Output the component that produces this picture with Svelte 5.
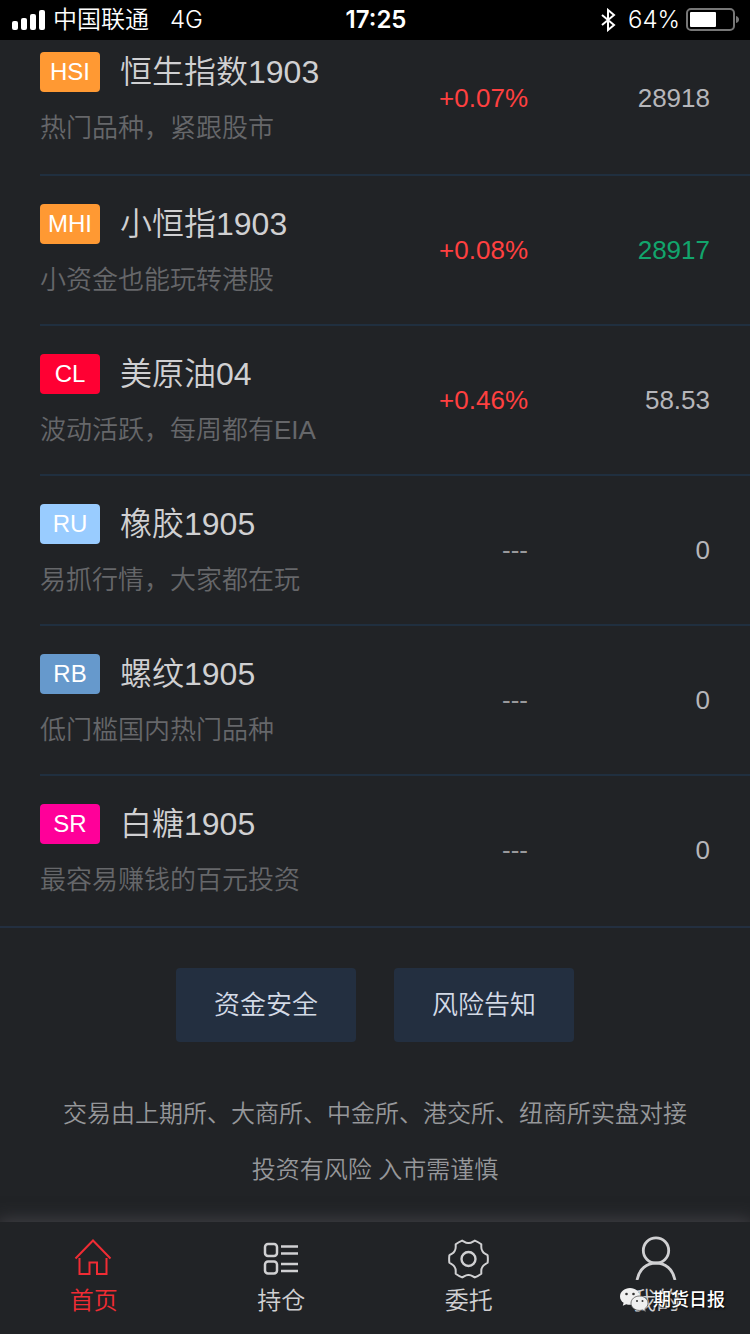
<script>
	const products = [
		{ code: "HSI", color: "#ff9933", name: "恒生指数1903", desc: "热门品种，紧跟股市", change: "+0.07%", price: "28918" },
		{ code: "MHI", color: "#ff9933", name: "小恒指1903", desc: "小资金也能玩转港股", change: "+0.08%", price: "28917", falling: true },
		{ code: "CL", color: "#ff0033", name: "美原油04", desc: "波动活跃，每周都有EIA", change: "+0.46%", price: "58.53" },
		{ code: "RU", color: "#99ccff", name: "橡胶1905", desc: "易抓行情，大家都在玩", change: "---", price: "0" },
		{ code: "RB", color: "#6699cc", name: "螺纹1905", desc: "低门槛国内热门品种", change: "---", price: "0" },
		{ code: "SR", color: "#ff0099", name: "白糖1905", desc: "最容易赚钱的百元投资", change: "---", price: "0" },
	];

	const tabs = [
		{ id: "home", label: "首页" },
		{ id: "hold", label: "持仓" },
		{ id: "order", label: "委托" },
		{ id: "mine", label: "我的" },
	];

	let active = "home";

	// six teeth, with a rounded valley between each pair
	const gearPath = (cx, cy) => {
		const at = (deg, r) => {
			const a = deg * Math.PI / 180;
			return `${(cx + r * Math.cos(a)).toFixed(2)} ${(cy + r * Math.sin(a)).toFixed(2)}`;
		};
		let d = `M${at(-11, 19.5)}`;
		for (let k = 0; k < 360; k += 60) {
			d += `Q${at(k, 19.6)} ${at(k + 11, 19.5)}`;
			d += `C${at(k + 18, 17.4)} ${at(k + 20, 16)} ${at(k + 30, 16)}`;
			d += `C${at(k + 40, 16)} ${at(k + 42, 17.4)} ${at(k + 49, 19.5)}`;
		}
		return d + "Z";
	};
</script>

<div class="app">
	<header class="status">
		<div class="carrier">
			<svg class="signal" width="34" height="20" viewBox="0 0 34 20" fill="#fff">
				<rect x="0" y="11" width="6" height="9" rx="2" />
				<rect x="9" y="8" width="6" height="12" rx="2" />
				<rect x="18" y="4" width="6" height="16" rx="2" />
				<rect x="27" y="0" width="6" height="20" rx="2" />
			</svg>
			<span>中国联通</span>
			<span class="network">4G</span>
		</div>
		<time>17:25</time>
		<div class="power">
			<svg width="16" height="24" viewBox="0 0 16 24" fill="none" stroke="#fff" stroke-width="2">
				<path d="M2 7L14 17L8 22V2L14 7L2 17" />
			</svg>
			<span class="percent">64%</span>
			<svg width="54" height="24" viewBox="0 0 54 24">
				<rect x="1" y="1" width="47" height="21" rx="4" fill="none" stroke="#777" stroke-width="2" />
				<rect x="4" y="4" width="26" height="15" rx="1" fill="#fff" />
				<path d="M50 8Q53 9 53 11.500Q53 14 50 15Z" fill="#777" />
			</svg>
		</div>
	</header>

	<ul class="products">
		{#each products as item}
			<li>
				<div class="info">
					<div class="title">
						<span class="badge" style="background-color: {item.color}">{item.code}</span>
						<h2>{item.name}</h2>
					</div>
					<p>{item.desc}</p>
				</div>
				<span class="change" class:empty={item.change === "---"}>{item.change}</span>
				<span class="price" class:falling={item.falling}>{item.price}</span>
			</li>
		{/each}
	</ul>

	<section class="about">
		<div class="buttons">
			<button>资金安全</button>
			<button>风险告知</button>
		</div>
		<p>交易由上期所、大商所、中金所、港交所、纽商所实盘对接</p>
		<p>投资有风险 入市需谨慎</p>
	</section>

	<nav>
		{#each tabs as tab}
			<a href="#{tab.id}" class:active={active === tab.id} on:click={() => active = tab.id}>
				<svg width="44" height="44" viewBox="0 0 44 44" fill="none" stroke="currentColor" stroke-width="2">
					{#if tab.id === "home"}
						<path d="M3.500 22.500L21 4.500L38.500 22.500" />
						<path d="M7.500 22V38H17.500V26.500H25V38H34.500V22" />
					{:else if tab.id === "hold"}
						<g stroke-width="2.500">
							<rect x="6" y="8" width="12" height="12" rx="3" />
							<rect x="6" y="25.500" width="12" height="12" rx="3" />
							<path d="M22 10.500H39M22 17.500H39M22 28H39M22 35H39" />
						</g>
					{:else if tab.id === "order"}
						<path d={gearPath(21.5, 23)} stroke-linejoin="round" />
						<circle cx="21.500" cy="23" r="7" stroke-width="2.400" />
					{:else}
						<circle cx="22" cy="14.500" r="12.700" stroke-width="2.800" />
						<path d="M3 44C5 33 13 27 22 27S39 33 41 44" stroke-width="2.800" />
					{/if}
				</svg>
				<span>{tab.label}</span>
			</a>
		{/each}
		<div class="watermark">
			<svg width="30" height="24" viewBox="0 0 30 24">
				<path d="M10 0C4.500 0 0 3.700 0 8.400C0 11 1.400 13.300 3.600 14.800L2.800 17.800L6.200 16.200C7.400 16.600 8.700 16.800 10 16.800C15.500 16.800 20 13 20 8.400S15.500 0 10 0Z" fill="#f0f0f0" />
				<path d="M19.500 8C14.800 8 11 11.200 11 15.200S14.800 22.400 19.500 22.400C20.600 22.400 21.600 22.200 22.600 21.900L25.600 23.400L24.900 20.700C26.800 19.400 28 17.400 28 15.200C28 11.200 24.200 8 19.500 8Z" fill="#f0f0f0" stroke="#555" stroke-width="0.800" />
				<g fill="#333">
					<circle cx="6.500" cy="6" r="1.300" />
					<circle cx="13.500" cy="6" r="1.300" />
					<circle cx="17" cy="13" r="1" />
					<circle cx="22.500" cy="13" r="1" />
				</g>
			</svg>
			<span>期货日报</span>
		</div>
	</nav>
</div>

<style>
	:global(body) {
		margin: 0;
		background-color: #212326;
	}
	.app {
		display: flex;
		flex-direction: column;
		min-height: 100vh;
		color: #d0d0d2;
		font-family: "Liberation Sans", "Noto Sans CJK SC", sans-serif;
		font-weight: 350;
	}
	h2, p, ul { margin: 0; padding: 0; font-weight: inherit; }

	.status {
		display: grid;
		grid-template-columns: 1fr auto 1fr;
		align-items: center;
		height: 40px;
		padding: 0 10px 0 12px;
		background-color: #000;
		color: #fff;
		font-family: Inter, "Noto Sans CJK SC", sans-serif;
		font-size: 24px;
		line-height: 40px;
	}
	.carrier { display: flex; align-items: center; gap: 7px; }
	.network { margin-left: 14px; }
	time { font-weight: 600; }
	.power {
		display: flex;
		align-items: center;
		justify-content: flex-end;
		gap: 6px;
	}
	.percent { margin-left: 6px; }

	.products { list-style: none; }
	li {
		display: grid;
		grid-template-columns: 1fr 128px 182px;
		align-items: center;
		margin-left: 40px;
		padding: 28px 40px 28px 0;
		border-bottom: 2px solid #202f3f;
		font-size: 26px;
		line-height: 32px;
	}
	li:first-child { padding-top: 12px; padding-bottom: 30px; }
	li:last-child { padding-bottom: 30px; border-bottom: none; }
	.title {
		display: flex;
		align-items: center;
		gap: 20px;
		height: 40px;
		margin-bottom: 20px;
	}
	.badge {
		width: 60px;
		border-radius: 4px;
		color: #fff;
		font-size: 24px;
		line-height: 40px;
		text-align: center;
	}
	h2 { font-size: 32px; line-height: 40px; }
	.info p { color: #66676a; }
	.change, .price { text-align: right; }
	.change { color: #ff4040; }
	.change.empty { color: #99999c; }
	.price { color: #b6b6ba; }
	.price.falling { color: #12a56c; }

	.about {
		padding: 40px 20px 20px;
		border-top: 2px solid #232f40;
		color: #96979a;
		font-size: 24px;
		line-height: 56px;
		text-align: center;
	}
	.buttons {
		display: flex;
		justify-content: center;
		gap: 38px;
		margin-bottom: 44px;
	}
	button {
		width: 180px;
		height: 74px;
		padding: 0;
		border: none;
		border-radius: 4px;
		background-color: #232f40;
		color: #d3dae6;
		font: inherit;
		font-size: 26px;
	}

	nav {
		position: relative;
		display: grid;
		grid-template-columns: repeat(4, 1fr);
		height: 112px;
		margin-top: auto;
		background-color: #212326;
		box-shadow: 0 0 16px 2px #424146;
	}
	a {
		display: flex;
		flex-direction: column;
		align-items: center;
		gap: 4px;
		padding-top: 14px;
		color: #d0d0d2;
		font-size: 24px;
		line-height: 34px;
		text-decoration: none;
	}
	a.active { color: #f02c34; }
	.watermark {
		position: absolute;
		right: 25px;
		bottom: 22px;
		display: flex;
		align-items: center;
		gap: 3px;
		color: #fff;
		font-size: 18px;
		font-weight: 500;
		line-height: 24px;
		text-shadow: 1px 1px 2px #000;
	}
</style>
